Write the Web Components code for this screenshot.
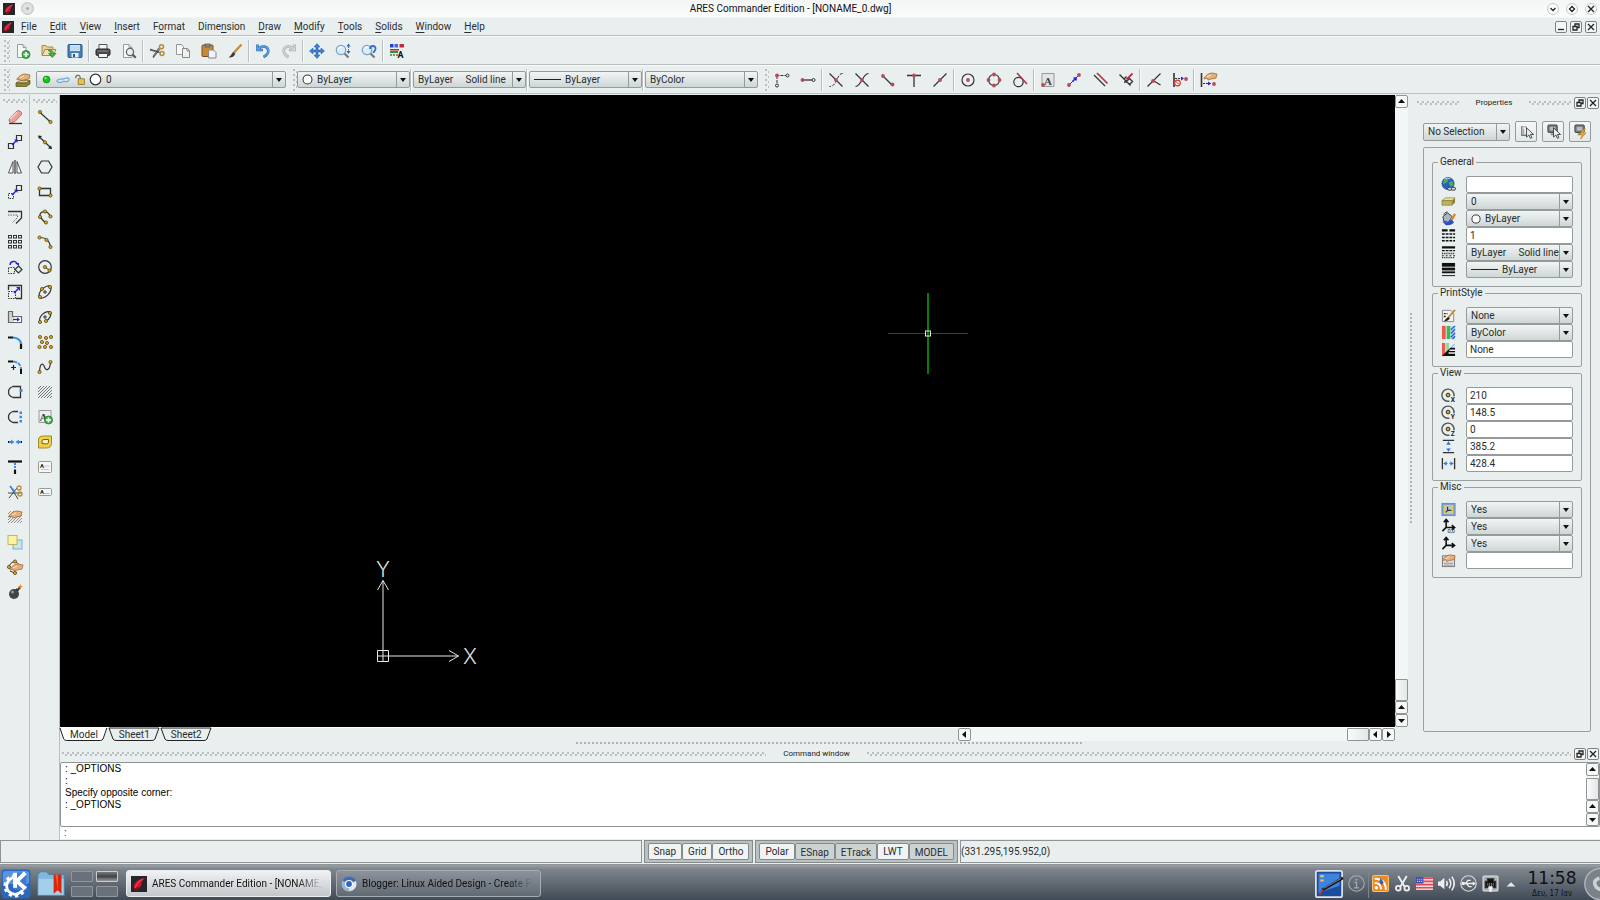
<!DOCTYPE html>
<html lang="en">
<head>
<meta charset="utf-8">
<title>ARES Commander Edition</title>
<style>
html,body{margin:0;height:100%}
body{font:10px/12px Roboto,"Open Sans",sans-serif;color:#2a2d2e;background:#e9efee;overflow:hidden}
</style>
</head>
<body>
<ares-app></ares-app>
<script>
const BASE = `*{box-sizing:border-box}button,input,select{font:inherit;color:inherit;margin:0;padding:0;border:0;background:none;border-radius:0;outline:0}svg{display:block}`;
function define(name, css, html) {
  customElements.define(name, class extends HTMLElement {
    connectedCallback() {
      if (this.shadowRoot) return;
      this.attachShadow({ mode: 'open' });
      this.shadowRoot.innerHTML = `<style>${BASE}${css}</style>` + (typeof html === 'function' ? html(this) : html);
    }
  });
}

/* ---------- icons, all on a 16 x 16 grid ---------- */
const K = 'stroke="#333" fill="none"';
const dot = (x, y, c = '#b84a5e') => `<circle cx="${x}" cy="${y}" r="1.9" fill="${c}"/>`;
const yd = (x, y) => `<circle cx="${x}" cy="${y}" r="1.6" fill="#d9a81e" stroke="#4a3a08" stroke-width=".7"/>`;
const page = (x, y) => `<path d="M${x} ${y}h5.500l3 3v7h-8.500z" fill="#f6f6f6" stroke="#9a9d9d"/><path d="M${x + 5.5} ${y}v3h3" fill="#ddd" stroke="#9a9d9d"/>`;
const hand = `<path d="M2 7c2-3 5-5 8-5l5 1-1 4-5 1-3 1-1-2-3 1z" fill="#e7b07a" stroke="#a3683a" stroke-width=".8"/><path d="M5 6l4-2" stroke="#fbe3c6"/>`;
const hatch = `<path d="M1 5l3-3M1 8l6-6M1 11l9-9M1 14L13 2M4 14L15 3M7 14l8-8M10 14l5-5M13 14l2-2" stroke="#666" stroke-width=".9"/>`;
const axes = `<path d="M5.500 2v8h8M5.500 10l-4 4M3 4.500l2.500-3 2.500 3M11.500 7.500l3 2.500-3 2.500" stroke="#111" fill="none" stroke-width="1.700"/>`;
const coordView = c => `<path d="M13.800 9A6.500 6.500 0 1 0 9 14" fill="none" stroke="#555" stroke-width="1.500"/><circle cx="7.500" cy="7.500" r="2" fill="#d9b01e" stroke="#222"/><text x="10.500" y="15" font-family="Roboto" font-size="7" font-weight="700" fill="#222">${c}</text>`;
const monitor = `<rect x="2" y="1" width="10" height="8" rx="1" fill="#777" stroke="#444"/><rect x="4" y="3" width="6" height="4" fill="#b9bec2"/><path d="M5 10h4v2H5z" fill="#888"/>`;
const cursor = `<path d="M8 4v10l2.500-2.300 1.700 3.600 1.600-.8-1.700-3.300h3.400z" fill="#eee" stroke="#333" stroke-width=".9"/>`;
const lens = `<circle cx="6" cy="7" r="4.700" fill="#d9ecfa" stroke="#7fa3c2" stroke-width="1.300"/><path d="M3.500 6.500a3 3 0 0 1 4-2" stroke="#fff" fill="none"/><path d="M9.500 10.500l4 4" stroke="#777" stroke-width="2.200"/>`;
const ICONS = {
  ares: `<rect width="16" height="16" fill="#26262a"/><path d="M3 12C2 7 7 3 14 2c-3 2-4 5-4 8l-4 4z" fill="#d3142c"/><path d="M4 13c1-5 4-8 8-10" stroke="#f2566a" fill="none"/><path d="M3 12l2 3 4-4z" fill="#8e0c1d"/>`,
  newdoc: `<path d="M2.500 1.500H8l3 3v10H2.500z" fill="#f8f8f8" stroke="#9a9d9d"/><path d="M8 1.500v3h3" fill="#ddd" stroke="#9a9d9d"/><circle cx="11" cy="11.500" r="4" fill="#3bb24a" stroke="#1f7a2c" stroke-width=".8"/><path d="M11 9v5M8.500 11.500h5" stroke="#fff" stroke-width="1.600"/>`,
  open: `<path d="M1 12V2.500h4l1.500 1.500H12v3" fill="#e8cf92" stroke="#a98a4a"/><path d="M1 12.500L4 6.500h11l-3 6z" fill="#f3e0b0" stroke="#a98a4a"/><path d="M7 7.500c3-1 5 0 5.500 3h2.500l-3.700 4-3.700-4h2.200c-.2-1.500-1-2.500-2.800-3z" fill="#4cae4a" stroke="#2a7a2a" stroke-width=".7"/>`,
  save: `<rect x="1" y="1.500" width="14" height="13" rx="1" fill="#4a7fb8" stroke="#2a5788"/><path d="M3 2h10v6H3z" fill="#cfe4f6"/><path d="M3 4h10M3 6h10" stroke="#a8c8e6" stroke-width=".7"/><path d="M4.500 10h7v4.500h-7z" fill="#e8eef2"/><path d="M6 11h2v3H6z" fill="#2a5788"/>`,
  print: `<path d="M4 1.500h8v5H4z" fill="#f4f4f4" stroke="#555"/><rect x="1" y="6" width="14" height="6.500" rx="1.500" fill="#4b4d4f" stroke="#222"/><path d="M2.500 8h11" stroke="#8b8e90"/><path d="M3.500 10.500h9v4h-9z" fill="#f4f4f4" stroke="#444"/>`,
  preview: `<path d="M2.500 1.500H8l3 3v10H2.500z" fill="#f8f8f8" stroke="#9a9d9d"/><path d="M8 1.500v3h3" fill="#ddd" stroke="#9a9d9d"/><circle cx="9" cy="9" r="3.600" fill="#e9f1f6cc" stroke="#666" stroke-width="1.300"/><path d="M11.800 11.800l3 3" stroke="#555" stroke-width="2"/>`,
  cut: `<path d="M1 7l9 2M4 14l6-9" stroke="#777" stroke-width="1.500"/><path d="M1 6l11 4M4 15l8-10" stroke="#333" stroke-width=".8"/><circle cx="12.500" cy="3.800" r="2" fill="none" stroke="#b58a3a" stroke-width="1.500"/><circle cx="13" cy="10.500" r="2" fill="none" stroke="#b58a3a" stroke-width="1.500"/>`,
  copy: `<path d="M1.500 1.500h5l2 2v8h-7z" fill="#f8f8f8" stroke="#999"/><path d="M7.500 5.500h5l2 2v7h-7z" fill="#f0f0f0" stroke="#888"/><path d="M12 5.500v2.500h2.500" fill="none" stroke="#888"/>`,
  paste: `<rect x="1" y="2" width="11" height="11.500" rx="1" fill="#c98a34" stroke="#7c4f17"/><rect x="4" y="1" width="5" height="3" fill="#888" stroke="#555" stroke-width=".7"/><path d="M7.500 7h5l2.500 2.500V15H7.500z" fill="#f2f2f2" stroke="#888"/>`,
  brush: `<path d="M14.500 1.500L7 9.500" stroke="#c9893c" stroke-width="2.200"/><path d="M8 9l-2 2" stroke="#888" stroke-width="2.500"/><path d="M6.500 9.500c-2 .5-2 3-5 5 3 .3 6-.8 6.500-3.500z" fill="#433"/>`,
  undo: `<path d="M2.500 1.500V7H8M3 6.500C6 2.500 12 2.500 13.200 7c.6 3-1.700 5.500-4.700 7" fill="none" stroke="#2867a8" stroke-width="2.600"/><path d="M2.500 2V7H7.500M3 6.500C6 2.500 12 2.500 13.200 7c.6 3-1.700 5.500-4.500 6.800" fill="none" stroke="#5a9ee2" stroke-width="1.600"/>`,
  redo: `<path d="M13.500 1.500V7H8M13 6.500C10 2.500 4 2.500 2.800 7c-.6 3 1.700 5.500 4.700 7" fill="none" stroke="#9fa4a4" stroke-width="2.600"/><path d="M13.500 2V7H8.500M13 6.500C10 2.500 4 2.500 2.800 7c-.6 3 1.700 5.500 4.500 6.800" fill="none" stroke="#cfd4d4" stroke-width="1.600"/>`,
  pan: `<path d="M8 .5l3 3.500H9v3h3V5l3.500 3-3.500 3V9H9v3h2l-3 3.500L5 12h2V9H4v2L.5 8 4 5v2h3V4H5z" fill="#3b7fd4" stroke="#1c559c" stroke-width=".5"/>`,
  zoomdyn: lens + `<path d="M13.500 1v9" stroke="#2864b4" stroke-dasharray="1.500 1"/><path d="M11.500 3.500l2-3 2 3zM11.500 8l2 3 2-3z" fill="#2864b4"/>`,
  zoomprev: lens + `<path d="M9 6c0-4 6-4 5.500 0 0 2-2 2-2 4" fill="none" stroke="#2f74c8" stroke-width="1.800"/>`,
  propspaint: `<path d="M1 1h3.500v3.500H1z" fill="#2244cc"/><path d="M5.500 1H9v3.500H5.500z" fill="#4466dd"/><path d="M10.500 1H15v3.500h-4.500z" fill="#cc2244"/><path d="M1 6h9v1.500H1z" fill="#c22"/><path d="M1 9h8" stroke="#18a038" stroke-width="2"/><path d="M1 12h8" stroke="#222" stroke-dasharray="2 1"/><text x="8.500" y="15" font-family="Roboto" font-size="9" font-weight="700" fill="#111">A</text>`,
  layers: `<path d="M1 11l4-2.500h10L11.500 11z" fill="#d8d07a" stroke="#6d6520" stroke-width=".7"/><path d="M1 11v3.500h10.500L15 12V8.500L11.500 11z" fill="#8d8436" stroke="#544d18" stroke-width=".7"/>` + hand,
  esn1: `<path d="M2.500 3.500H12M3 4v8" ${K} stroke-dasharray="3 1"/>${dot(3, 3.5)}<circle cx="13.500" cy="3.500" r="1.500" ${K}/><circle cx="3" cy="13.500" r="1.500" ${K}/>`,
  esn2: `<path d="M3 8h9" ${K} stroke-width="1.300"/>${dot(2.5, 8)}<circle cx="13.500" cy="8" r="1.500" ${K}/>`,
  inter: `<path d="M1.500 1.500l13 13" ${K} stroke-width="1.200"/><path d="M14.500 1.500c-6 0-5 13-13 13" ${K} stroke-dasharray="3 1.500"/>${dot(8, 8)}`,
  appint: `<path d="M1.500 1.500l13 13M14.500 1.500C8 2 8 14 1.500 14.500" ${K} stroke-width="1.200"/>${dot(8, 8)}`,
  endp: `<path d="M3 4l9 9" ${K} stroke-width="1.200"/>${dot(3, 4)}${dot(12.5, 12.5)}`,
  perpt: `<path d="M1 3.500h14M8 4v11" ${K} stroke-width="1.300"/>${dot(8, 3.5)}`,
  mid: `<path d="M1.500 14.500l13-13" ${K} stroke-width="1.200"/>${dot(8, 8)}`,
  center: `<circle cx="8" cy="8" r="6" ${K} stroke-width="1.200"/>${dot(8, 8)}`,
  quad: `<circle cx="8" cy="8" r="5.500" ${K} stroke-width="1.200"/>${dot(8, 2.5)}${dot(8, 13.5)}${dot(2.5, 8)}${dot(13.5, 8)}`,
  tangent: `<circle cx="6.500" cy="10" r="4.700" ${K} stroke-width="1.200"/><path d="M5 1l10 11" stroke="#b8304a" stroke-width="1.600"/>`,
  insertp: `<path d="M2 1.500h12v13H2z" fill="#e4e6e6" stroke="#999"/><text x="4" y="12.500" font-family="Liberation Serif" font-size="11" font-weight="700" fill="#444">A</text>${dot(3, 13)}`,
  node: `<path d="M3 13L13 3" stroke="#22a" stroke-width="1"/><path d="M6.500 9.500l3-3M7.500 6h2.500v2.500" stroke="#22e" stroke-width="1.600" fill="none"/>${dot(3, 13)}${dot(13, 3)}`,
  parallel: `<path d="M2 3l11 11" ${K} stroke-width="1.300"/><path d="M5 1l10.500 10.500" stroke="#b8304a" stroke-width="1.700"/>`,
  perp: `<path d="M1.500 2.500l11 11M6 7l2.500-2.500M9 10l-3 0M8.500 9.500l3-3 3 3-3.500 3.500" ${K} stroke-width="1.400"/><path d="M14.500 1.500l-6 6" stroke="#b8304a" stroke-width="1.800"/>`,
  nearest: `<path d="M1.500 14.500l13-13M8 9l6.500 4" ${K} stroke-width="1.200"/>${dot(7, 9)}`,
  clear: `<path d="M2 1v14" ${K} stroke-width="1.600"/><path d="M3 6.500h9" ${K} stroke-dasharray="2 1"/><path d="M9 4.500l3 2-3 2z" fill="#22c"/>${dot(14, 7)}<circle cx="5.500" cy="11" r="2.800" fill="#fff" stroke="#e03028" stroke-width="1.200"/><path d="M3.800 9.500l3.500 3" stroke="#e03028"/>`,
  esnopt: `<path d="M1.500 1v14" ${K} stroke-width="1.600"/><g transform="translate(2 -1)">${hand}</g><path d="M3 11.500h9" ${K} stroke-dasharray="2 1"/><path d="M8 9.500l3 2-3 2z" fill="#22c"/>${dot(14, 12)}`,
  erase: `<path d="M2 14.500h13" ${K} stroke-width="1.300"/><path d="M2.500 9.500L9.500 2.500q1.500-1.500 3.500-.5t1.500 3.500L8 12.500q-2 1.500-4.500 1T2.500 9.500z" fill="#eba199" stroke="#b4584e" stroke-width=".8"/><path d="M3 10l7-6.500" stroke="#f9d5d0" stroke-width="1.600"/>`,
  movec: `<path d="M1.500 9.500h5v5h-5zM9.500 1.500h5v5h-5z" ${K} stroke-width="1.200"/><path d="M5 11l4-4" stroke="#22d" stroke-width="1.500"/><path d="M7 5.500h3.500V9z" fill="#22d"/>`,
  mirror: `<path d="M6 2.500v11.500H1.500zM10 2.500v11.500h4.500z" fill="#fafafa" stroke="#444" stroke-width=".9"/><path d="M8 1v14" ${K} stroke-width="1.200"/>`,
  copyc: `<path d="M1.500 9.500h5v5h-5z" ${K} stroke-dasharray="1.500 1"/><path d="M9.500 1.500h5v5h-5z" ${K} stroke-width="1.200"/><path d="M5 11l4-4" stroke="#22d" stroke-width="1.500"/><path d="M7 5.500h3.500V9z" fill="#22d"/>`,
  offset: `<path d="M1 2.500h13.500V9L9 14.500" ${K} stroke-width="1.300"/><path d="M1 6h9.500v2.500L5 14" stroke="#666" fill="none" stroke-dasharray="1.500 1"/>`,
  array: [1.5, 6.5, 11.5].map(y => [1.5, 6.5, 11.5].map(x => `<rect x="${x}" y="${y}" width="3" height="2.500" ${K}/>`).join('')).join(''),
  rotate: `<path d="M1.500 9v5.500h6V8.500h-6" ${K} stroke-dasharray="1.500 1"/><path d="M11.500 7l3.500 3.500-3.500 3.500L8 10.500z" ${K} stroke-width="1.200"/><path d="M3 6c0-4 6-5 7-1" stroke="#22d" fill="none" stroke-width="1.300"/><path d="M8 4h4v3z" fill="#22d"/>`,
  scale: `<path d="M1.500 6V1.500h13v13H9" ${K} stroke-width="1.300"/><path d="M1.500 7.500h7v7h-7z" ${K} stroke-dasharray="1.500 1"/><path d="M7 9l4-4" stroke="#22d" stroke-width="1.500"/><path d="M9 3h4v4z" fill="#22d"/>`,
  stretch: `<path d="M1.500 2.500h4v5h9v6h-13z" fill="#d5d6c8" stroke="#666" stroke-width="1.200"/><path d="M7 8.500h7v4.500H7z" fill="#fff"/><path d="M6 10.500h6" stroke="#22d" stroke-width="1.300"/><path d="M10 8.500l3 2-3 2z" fill="#22d"/>`,
  fillet: `<path d="M1 3.500h5M14 9.500V15" stroke="#111" stroke-width="2.200"/><path d="M6 3.500Q13 4 14 9.500" fill="none" stroke="#3a8be8" stroke-width="2"/>`,
  addfillet: `<path d="M1 2.500h5M14 9.500V15" stroke="#111" stroke-width="2"/><path d="M6 2.500Q13 3 14 9.500" fill="none" stroke="#3a8be8" stroke-width="2" stroke-dasharray="4 1"/><path d="M6.500 6v5M4 8.500h5" stroke="#222" stroke-width="1.200"/>`,
  brk: `<path d="M13.500 5V2.500H6Q1.500 4 1.500 8T6 13.500h7.500V8" ${K} stroke-width="1.300"/><path d="M12.500 5h3v3h-3z" fill="#3a8be8"/>`,
  brk2: `<path d="M11 2.500H6Q1.500 4 1.500 8T6 13.500h5" ${K} stroke-width="1.300"/><path d="M12.500 2.500H15v2.500h-2.500zM12.500 6.800H15v2.500h-2.500zM12.500 11H15v2.500h-2.500z" fill="#3a8be8"/>`,
  join: `<path d="M1 8h2M13 8h2" stroke="#111" stroke-width="1.800"/><path d="M2 8h3M11 8h3" stroke="#3a8be8" stroke-width="1.800"/><path d="M4 5.500L7.500 8 4 10.500zM12 5.500L8.500 8l3.500 2.500z" fill="#3a8be8"/>`,
  extend: `<path d="M1 2.500h14" stroke="#111" stroke-width="2.200"/><path d="M8 4v7" stroke="#3a8be8" stroke-width="2" stroke-dasharray="2 1"/><path d="M8 11v4" stroke="#111" stroke-width="2.200"/>`,
  trim: `<path d="M1 9h13M3 2l8 13M2 14l8-10" stroke="#444"/><path d="M3 2l5 6" stroke="#3a8be8" stroke-width="1.800"/><circle cx="12" cy="4" r="2" fill="none" stroke="#b58a3a" stroke-width="1.300"/><circle cx="13" cy="10" r="2" fill="none" stroke="#b58a3a" stroke-width="1.300"/>`,
  edithatch: `<g opacity=".8">${hatch}</g>` + hand,
  order: `<rect x="6" y="6" width="9" height="9" fill="#c5e4f4" stroke="#6aa4c4" stroke-width=".8"/><rect x="1" y="1.500" width="9" height="9" fill="#fbf2a4" stroke="#b8aa4a" stroke-width=".8"/>`,
  editpoly: `<path d="M2 7q5-9 11 0M3 12l5 2" ${K}/>${yd(2, 8)}${yd(8, 2.5)}${yd(8, 14)}<g transform="translate(1 3)">${hand}</g>`,
  bomb: `<circle cx="7" cy="10" r="5" fill="#444"/><circle cx="5.500" cy="8" r="1.500" fill="#999"/><path d="M9 5l2 1 2-3" stroke="#333" stroke-width="1.800" fill="none"/><path d="M13.500 0l.5 2 2 .5-2 1-.5 2-1-2-2-.5 2-1z" fill="#f08020"/>`,
  line: `<path d="M2.500 3l11 10" ${K} stroke-width="1.200"/>${yd(3, 3)}${yd(13.5, 13)}`,
  iline: `<path d="M2 2.500L14 14" ${K} stroke-width="1.200"/><path d="M1 1.500l4 .5-3 3zM15 15l-4-.5 3-3z" fill="#222"/>${yd(8, 8.3)}`,
  poly: `<path d="M4.500 2h7L15 8l-3.500 6h-7L1 8z" ${K} stroke-width="1.200"/>`,
  rect: `<path d="M2.500 4.500h11v7h-11z" ${K} stroke-width="1.300"/>${yd(2.5, 4.5)}${yd(13.5, 11.5)}`,
  arc3: `<path d="M3 8C2 2 10 0 13 7M8 13.500L3 8" ${K} stroke-width="1.200"/>${yd(3, 8)}${yd(8, 2.5)}${yd(13.5, 7.5)}${yd(9, 13.5)}`,
  arc: `<path d="M2.500 3.500Q12 3 13.500 13" ${K} stroke-width="1.200"/>${yd(2.5, 3.5)}${yd(9.5, 6)}${yd(13.5, 13)}`,
  circle: `<circle cx="8" cy="8" r="6.300" ${K} stroke-width="1.200"/><path d="M8 8l4 3" ${K}/>${yd(8, 8)}${yd(12.5, 11.5)}`,
  ellipse: `<ellipse cx="8" cy="8" rx="7.500" ry="4" transform="rotate(-45 8 8)" ${K} stroke-width="1.200"/><path d="M8 6v4M6 8h4" ${K}/>${yd(3, 13)}${yd(13, 3)}${yd(5, 5)}`,
  ellarc: `<path d="M3 13C1 8 8 1 13 3c2 2 0 7-4 9" ${K} stroke-width="1.200"/><path d="M8 6v4M6 8h4" ${K}/>${yd(3, 13)}${yd(13, 4)}${yd(9, 12)}`,
  points: yd(3, 3) + yd(9, 4) + yd(14, 3) + yd(5, 8) + yd(10, 9) + yd(2.5, 13) + yd(8, 13) + yd(14, 13),
  spline: `<path d="M2.500 13C3 3 6 4 7.500 8S13 12 13.500 3" ${K} stroke-width="1.200"/>${yd(2.5, 13)}${yd(13.5, 3)}`,
  hatch,
  note: `<path d="M2 1.500h12v12H2z" fill="#eee" stroke="#999"/><text x="2.500" y="12" font-family="Liberation Serif" font-size="11" font-weight="700" fill="#444">A</text><circle cx="11.500" cy="11" r="4" fill="#3bb24a" stroke="#1f7a2c" stroke-width=".8"/><path d="M11.500 8.500v5M9 11h5" stroke="#fff" stroke-width="1.600"/>`,
  region: `<path d="M1.500 5Q2 2 6 2h8.500v7q0 5-5 5H1.500z" fill="#f0cf4c" stroke="#9a8022" stroke-width=".9"/><path d="M5 9.500V7q0-1.500 2-1.500h4.500V8q0 2-2 2z" fill="#f8eebc" stroke="#7a6412"/>`,
  text1: `<rect x="1.500" y="2.500" width="13" height="11" rx="1" fill="#f5f6f6" stroke="#999"/><text x="3" y="9" font-family="Roboto" font-size="6" font-weight="700" fill="#222">A</text><path d="M7.500 7h5M4 10.500h8" stroke="#bbb" stroke-width=".8"/>`,
  text2: `<rect x="1.500" y="4.500" width="13" height="7" rx="1" fill="#f5f6f6" stroke="#999"/><text x="3" y="10" font-family="Roboto" font-size="6" font-weight="700" fill="#222">A</text><path d="M7.500 9.500h5" stroke="#bbb"/>`,
  quick: `<path d="M3 2v10h6" fill="none" stroke="#777" stroke-width="1.400"/><path d="M3 3h5v3M5 5v6" stroke="#999" fill="none"/>` + cursor,
  selmon: monitor + cursor,
  flash: monitor + `<path d="M12 5l-5 6h3l-2 5 6-6.500h-3L13 5z" fill="#f2b320" stroke="#a87308" stroke-width=".6"/>`,
  globe: `<circle cx="7.500" cy="7" r="6.500" fill="#2a5fc0" stroke="#143a7c" stroke-width=".7"/><path d="M3 3q3-2.500 5-1l-1 3-3 2-2 1zM8 6l4-2 1.500 4-3 3z" fill="#45b058"/><path d="M4 2q3-1.500 6 0" stroke="#bcd8ff" fill="none"/><rect x="7" y="11" width="5" height="3" rx="1.500" fill="#ddd" stroke="#333"/><rect x="11" y="11" width="4.500" height="3" rx="1.500" fill="#ddd" stroke="#333"/>`,
  layer: `<path d="M1 7l4-3h10l-3 3z" fill="#e6de94" stroke="#7a7230" stroke-width=".6"/><path d="M1 7v5h11V7z" fill="#bdb35c" stroke="#7a7230" stroke-width=".6"/><path d="M12 7l3-3v5l-3 3z" fill="#8a8138"/>`,
  bucket: `<path d="M2 6l5-4 5 4-4 6-5-1z" fill="#a8b6c6" stroke="#334"/><path d="M3 4q1-3 4-3" ${K}/><path d="M15 3l-4 7" stroke="#d98c2c" stroke-width="2.500"/><path d="M1 11q6 3 10-2l3 3q-3 4-9 3z" fill="#2a4fc8"/>`,
  ltscale: `<path d="M1 2.500h14" stroke="#111" stroke-width="2.500" stroke-dasharray="6 2"/><path d="M1 6.500h14M1 10h14M1 13.500h14" stroke="#111" stroke-width="1.600" stroke-dasharray="3 1"/>`,
  ltype: `<path d="M1 2.500h14" stroke="#111" stroke-width="2.400"/><path d="M1 6h14" stroke="#111" stroke-width="1.500" stroke-dasharray="3 1"/><path d="M1 9h14M1 13.500h14" stroke="#111" stroke-width="1.500" stroke-dasharray="1 1"/><path d="M1 11.500h14" stroke="#111" stroke-dasharray="2 2"/>`,
  lweight: `<path d="M1 3h14" stroke="#111" stroke-width="4"/><path d="M1 7.500h14" stroke="#111" stroke-width="3"/><path d="M1 11h14" stroke="#111" stroke-width="2"/><path d="M1 14.500h14" stroke="#111"/>`,
  pstyle: `<path d="M1.500 2.500h9l3 3v9h-12z" fill="#f4f4f4" stroke="#888"/><path d="M3 6h4M3 9h3" stroke="#222" stroke-width="1.500" stroke-dasharray="2 1"/><path d="M15 2L7 11" stroke="#c9893c" stroke-width="2"/><path d="M8 9.500q-3 1-5 5 4-.5 6.500-3z" fill="#222"/>`,
  ptable: `<path d="M1 1h4v14H1z" fill="#ec5a4c"/><path d="M6 1h4v14H6z" fill="#3cb85c"/><path d="M10.500 1H15v14h-4.500z" fill="#b8d0f4"/><path d="M10.500 5L15 1M10.500 9L15 4.500M10.500 13L15 8.500M12 15l3-3" stroke="#2864c8" stroke-width="1.400"/>`,
  pattach: `<path d="M1 1h3.500v14H1z" fill="#ec5a4c"/><path d="M5.500 1h3v9l-3 3z" fill="#8cd8a0"/><path d="M9.500 8l5-6" stroke="#6a9be8"/><path d="M1 15L10 6h5v2H9v1.500h6V11H8v1.500h7V15z" fill="#111"/>`,
  cx: coordView('X'), cy: coordView('Y'), cz: coordView('Z'),
  height: `<path d="M2 1.500h12M2 14.500h12" ${K} stroke-width="1.400"/><path d="M8 3v10" stroke="#3a78e0" stroke-dasharray="3 4"/><path d="M5.500 6L8 2.500 10.500 6zM5.500 10L8 13.500l2.500-3.500z" fill="#3a78e0"/>`,
  width: `<path d="M1.500 2v12M14.500 2v12" ${K} stroke-width="1.400"/><path d="M3 8h10" stroke="#3a78e0" stroke-dasharray="4 2"/><path d="M6 5.500L2.500 8 6 10.500zM10 5.500L13.500 8 10 10.500z" fill="#3a78e0"/>`,
  ucsicon: `<rect x="1" y="1.500" width="14" height="13" fill="#7f9fdc" stroke="#6a88c8"/><rect x="3.500" y="4" width="9" height="8" fill="#b4c8ec" stroke="#e8d030" stroke-width="1.400"/><path d="M7 5v4h4M7 9l-2 2" ${K} stroke-width="1.300"/>`,
  origin: `<g transform="translate(0 -1)">${axes}</g><text x="7" y="15" font-family="Roboto" font-size="6" fill="#222">0,0</text>`,
  axes,
  ucsname: `<rect x="1.500" y="3" width="13" height="11.500" fill="#ddd" stroke="#777"/><path d="M3 11h10M3 13h10" stroke="#999"/>` + hand,
  green: `<circle cx="8" cy="8" r="5" fill="#14c814" stroke="#0a7a0a"/><circle cx="6.500" cy="6" r="1.500" fill="#8cf08c"/>`,
  cloud: `<path d="M1 9.500Q1.500 6.500 7 7l6-1.500q3 .5 1.500 3T9 9.500q-5 3-8 0z" fill="#cfe6f6" stroke="#6aa4d0" stroke-width="1.200"/>`,
  unlock: `<rect x="6" y="7" width="9" height="8" fill="#e8c24c" stroke="#7c6212"/><path d="M9 7V5Q8 1 5 2T2.500 6" fill="none" stroke="#777" stroke-width="2"/>`,
  ring: `<circle cx="8" cy="8" r="6.500" fill="#fff" stroke="#333" stroke-width="1.500"/>`,
  kde: `<rect x=".3" y=".3" width="15.400" height="15.400" rx="1.800" fill="#2a68c0"/><rect x="1" y="1" width="14" height="7" rx="1.500" fill="#5a94e0"/><circle cx="7.500" cy="9" r="4.500" fill="none" stroke="#fff" stroke-width="1.500"/><circle cx="7.500" cy="9" r="5.500" fill="none" stroke="#fff" stroke-width="1.400" stroke-dasharray="1.700 1.750"/><path d="M6.500 2h7v9h-7z" fill="#3f7cd0"/><path d="M7.500 2v8M13 2L8.500 6.500 13 10.500" fill="none" stroke="#fff" stroke-width="2.100"/>`,
  folder: `<path d="M.5 14.500v-12L2 1h3.500L7 2.500h8.500v12z" fill="#7fb8dc" stroke="#4a86b0" stroke-width=".6"/><path d="M.8 5h14.400v9.200H.8z" fill="#a4cfea"/><path d="M9.500 2.500H14V13.500l-2.200-2-2.300 2z" fill="#d8260c"/><path d="M10.500 2.500h1.500v9" fill="#f05a30"/>`,
  chromium: `<circle cx="8" cy="8" r="7.500" fill="#9fb4cc"/><path d="M8 8L1.500 4.500A7.500 7.500 0 0 1 15 5z" fill="#3f6cb0"/><path d="M8 8l7-3q1.500 6-3 9l-4 1z" fill="#dfe6ee"/><circle cx="8" cy="8" r="3.500" fill="#2f66c8" stroke="#fff" stroke-width="1.200"/>`,
  desk: `<rect x=".5" y=".5" width="15" height="15" rx="1" fill="#1c4c9c" stroke="#dde2e6"/><path d="M2 2h12v7L2 13z" fill="#3f84dc"/><path d="M3 3.500h2M3 6h2" stroke="#f0c060" stroke-width="1.200"/><path d="M4 11.500l12-7" stroke="#111" stroke-width="1.500"/><path d="M5 10.500l10-5.700" stroke="#99a" stroke-width=".5"/><path d="M2.500 14l2-3" stroke="#c33"/>`,
  info: `<circle cx="8" cy="8" r="7.300" fill="none" stroke="#a6abb2"/><circle cx="8" cy="4.500" r="1" fill="#a6abb2"/><path d="M6 7h2v5M5.500 12.200h5" stroke="#a6abb2" stroke-width="1.200" fill="none"/>`,
  rss: `<rect x=".5" y=".5" width="15" height="15" rx="1.500" fill="#ee8a22" stroke="#f8c070"/><circle cx="4" cy="12" r="1.600" fill="#fff"/><path d="M2.500 7.500q6 0 6 6M2.500 3.500q10.500 0 10.500 10.500" fill="none" stroke="#fff" stroke-width="1.800"/><path d="M8 2.500l3 4.500-2 2.500-2-3z" fill="#2a60b8"/>`,
  klip: `<path d="M4 1l6 10M12 1L6 11" stroke="#eee" stroke-width="1.800"/><circle cx="4" cy="12.500" r="2.200" fill="none" stroke="#eee" stroke-width="1.700"/><circle cx="12" cy="12.500" r="2.200" fill="none" stroke="#eee" stroke-width="1.700"/>`,
  flag: `<rect y="2" width="16" height="12" fill="#f4dede"/><path d="M0 3h16M0 6h16M0 9h16M0 12h16" stroke="#e04a58" stroke-width="1.600"/><rect y="2" width="7" height="6" fill="#3a4cb0"/><path d="M1 4h5M1 6h5" stroke="#cdd" stroke-dasharray="1 1"/>`,
  sound: `<path d="M0 6h2l4-3.500v11L2 10H0z" fill="#eee"/><path d="M8 5.500q1.500 2.500 0 5M10.500 3.500q3 4.500 0 9M13 1.500q4.500 6.500 0 13" fill="none" stroke="#eee" stroke-width="1.500"/>`,
  usb: `<circle cx="8" cy="8" r="7.300" fill="none" stroke="#d8dbde"/><path d="M2 8h12M5 8l2.500-3H10M6 8l2.500 3H11" stroke="#eee" stroke-width="1.200" fill="none"/><circle cx="3" cy="8" r="1.700" fill="#eee"/><path d="M12 6l3 2-3 2z" fill="#eee"/>`,
  net: `<rect x="1" y="1" width="14" height="14" rx="1" fill="#aaafb4" stroke="#e4e6e8"/><path d="M3 12V6h2V3.500h6V6h2v6z" fill="#111" stroke="#333"/><path d="M5.500 7.500v3M7.200 7.500v3M8.900 7.500v3M10.600 7.500v3" stroke="#999" stroke-width=".7"/><path d="M6 10.500h4v3H9V16H7v-2.500H6z" fill="#f4f4f4"/>`,
  up: `<path d="M1 12l7-7 7 7z" fill="#e8eaec"/>`,
  cashew: `<circle cx="10" cy="8" r="9.500" fill="#7b828a" stroke="#b4b9be" stroke-width=".8"/><path d="M9.500 4.500q-4 1-2.500 4.500t6 1.500" fill="none" stroke="#cfd3d6" stroke-width="2.200"/>`
};

define('ares-icon', `:host{display:block;flex:none;width:var(--size,16px);height:var(--size,16px)}svg{width:100%;height:100%;overflow:visible}`,
  el => `<svg viewBox="0 0 16 16" aria-hidden="true">${ICONS[el.getAttribute('name')]}</svg>`);

define('ares-grip', `:host{display:block;flex:none;opacity:.75;background:radial-gradient(circle at 1px 1px,#a9afaf 1px,transparent 1px) 0 0/5px 5px,radial-gradient(circle at 1px 1px,#a9afaf 1px,transparent 1px) 3px 2px/5px 5px}`, '');

define('ares-tool', `:host{display:block;flex:none;width:26px;height:25px}button{width:100%;height:100%;display:grid;place-items:center}`,
  el => `<button title="${el.getAttribute('icon')}" aria-label="${el.getAttribute('icon')}"><ares-icon name="${el.getAttribute('icon')}"></ares-icon></button>`);

define('ares-sep', `:host{display:block;flex:none;width:2px;height:22px;border-left:1px solid #b9bfbf;border-right:1px solid #fafcfc}`, '');

define('ares-toolbar', `:host{display:flex;align-items:center;border-top:1px solid #fafcfb;border-bottom:1px solid #b9bfbf;padding-left:4px}ares-grip{width:6px;height:22px}`,
  `<ares-grip></ares-grip><slot></slot>`);

define('ares-combo', `:host{display:flex;flex:none;height:17px;border:1px solid #959b9b;border-radius:2px;background:linear-gradient(#f1f5f4,#cfd6d6);align-items:center;position:relative;overflow:hidden}
::slotted(*){margin-left:4px}
select{appearance:none;flex:1;min-width:0;width:0;height:100%;padding-left:4px;line-height:15px;overflow:hidden}
i{flex:none;align-self:stretch;width:13px;border-left:1px solid #959b9b;display:grid;place-items:center;pointer-events:none}
i::after{content:"";border:3px solid transparent;border-top:4px solid #111;border-bottom:0}`,
  el => `<slot></slot><select aria-label="${el.getAttribute('label')}"><option>${el.getAttribute('value').replace(/ {2,}/g, m => '&nbsp;'.repeat(m.length))}</option></select><i></i>`);

define('ares-arrow', `:host{display:block;flex:none;width:13px;height:13px}button{width:100%;height:100%;border:1px solid #8f9595;border-radius:2px;background:#f6f8f8;display:grid;place-items:center}svg{width:7px;height:7px}`,
  el => `<button aria-label="Scroll ${el.getAttribute('dir')}"><svg viewBox="0 0 7 7"><path fill="#111" d="${{ up: 'M0 5l3.500-4L7 5z', down: 'M0 2h7L3.500 6z', left: 'M5 0v7L1 3.500z', right: 'M2 0v7l4-3.500z' }[el.getAttribute('dir')]}"/></svg></button>`);

define('ares-scroll', `:host{display:flex;background:#f3f6f6}:host([vertical]){flex-direction:column;width:13px}:host(:not([vertical])){height:13px}
.track{flex:1}.thumb{flex:none;border:1px solid #8f9595;border-radius:1px;background:linear-gradient(90deg,#fafbfb,#e2e7e7);width:22px;height:13px}:host([vertical]) .thumb{width:13px;height:22px}`,
  el => { const v = el.hasAttribute('vertical'), a = v ? 'up' : 'left', b = v ? 'down' : 'right';
    return `<ares-arrow dir="${a}"></ares-arrow><div class="track"></div><div class="thumb"></div><ares-arrow dir="${a}"></ares-arrow><ares-arrow dir="${b}"></ares-arrow>`; });

define('ares-winbtn', `:host{display:block;flex:none}button{width:12px;height:12px;border:1px solid #7c8282;border-radius:2px;background:#f3f6f6;display:grid;place-items:center}svg{width:8px;height:8px}:host([round]) button{border-radius:50%;border-color:#c4c9c9;background:#fbfcfc}`,
  el => `<button aria-label="${el.getAttribute('kind')}"><svg viewBox="0 0 8 8" fill="none" stroke="#222" stroke-width="1.300"><path d="${{ close: 'M1 1l6 6M7 1L1 7', float: 'M3 3V1h4v3.500H5M1 3.500h4V7H1z', min: 'M1 6.500h6', down: 'M1.500 3L4 5.500 6.500 3', diamond: 'M4 1.500L6.500 4 4 6.500 1.500 4z' }[el.getAttribute('kind')]}"/></svg></button>`);

define('ares-docktitle', `:host{display:flex;align-items:center;padding:0 1px 0 2px}ares-grip{flex:1;height:5px}h2{font:8px/12px Roboto,sans-serif;margin:0 17px;color:#222}ares-winbtn{margin-left:1px}ares-winbtn.f{margin-left:3px}`,
  `<ares-grip></ares-grip><h2><slot></slot></h2><ares-grip></ares-grip><ares-winbtn class="f" kind="float"></ares-winbtn><ares-winbtn kind="close"></ares-winbtn>`);

define('ares-group', `:host{display:block}fieldset{margin:0;border:1px solid #9aa0a0;border-radius:2px;padding:8px 8px 8px;min-width:0}legend{padding:0 2px;margin-left:-3px;font-size:10px;line-height:12px}`,
  el => `<fieldset><legend>${el.getAttribute('title-text')}</legend><slot></slot></fieldset>`);

define('ares-field', `:host{display:grid;grid-template-columns:16px minmax(0,1fr);column-gap:9px;height:17px;align-items:center}label{--size:15px}input{width:100%;height:17px;border:1px solid #959b9b;border-radius:2px;background:#fff;padding-left:3px}`,
  el => { const n = el.getAttribute('label'), v = el.getAttribute('value') || '', ic = `<ares-icon name="${el.getAttribute('icon')}"></ares-icon>`;
    return el.hasAttribute('combo')
      ? `<label>${ic}</label><ares-combo label="${n}" value="${v}"><slot></slot></ares-combo>`
      : `<label for="f" aria-label="${n}">${ic}</label><input id="f" value="${v}" aria-label="${n}">`; });

define('ares-line', `:host{display:block;flex:none;width:27px;height:1px;background:#222}`, '');

define('ares-menubar', `:host{display:flex;align-items:center;height:19px;padding:0 3px 0 2px;border-top:1px solid #f1f5f4;border-bottom:1px solid #b9bfbf;--size:12px}nav{display:flex;gap:13px;margin-left:7px;flex:1}u{text-underline-offset:2px}ares-winbtn{margin-left:3px}`,
  `<ares-icon name="ares"></ares-icon><nav>${['_File', '_Edit', '_View', '_Insert', 'F_ormat', 'Dime_nsion', '_Draw', '_Modify', '_Tools', '_Solids', '_Window', '_Help'].map(t => `<button>${t.replace(/_(.)/, '<u>$1</u>')}</button>`).join('')}</nav><ares-winbtn kind="min"></ares-winbtn><ares-winbtn kind="float"></ares-winbtn><ares-winbtn kind="close"></ares-winbtn>`);

define('ares-titlebar', `:host{display:flex;align-items:center;height:17px;padding:0 3px;background:linear-gradient(#f4f6f5,#fbfcfc);--size:12px}h1{flex:1;text-align:center;font:10px/12px Roboto,sans-serif;margin:0;padding-left:7px;color:#111}.b{width:13px;height:13px;border-radius:50%;border:1px solid #bfc3c3;background:radial-gradient(circle,#a9adad 1px,#e2e5e5 2px,#d3d6d6);margin-left:6px}ares-winbtn{margin-left:7px}`,
  `<ares-icon name="ares"></ares-icon><button class="b" aria-label="Window menu"></button><h1>ARES Commander Edition - [NONAME_0.dwg]</h1><ares-winbtn round kind="down"></ares-winbtn><ares-winbtn round kind="diamond"></ares-winbtn><ares-winbtn round kind="close"></ares-winbtn>`);

define('ares-palette', `:host{display:flex;flex-direction:column;align-items:center;width:30px;border-right:1px solid #b9bfbf;padding-top:4px}ares-grip{width:24px;height:5px}`,
  el => `<ares-grip></ares-grip>${el.getAttribute('tools').split(' ').map(t => `<ares-tool icon="${t}"></ares-tool>`).join('')}`);

define('ares-canvas', `:host{display:block;position:relative;background:#000;overflow:hidden}svg{position:absolute;overflow:visible}.cross{left:65%;top:238px;width:1px;height:1px}.ucs{left:323px;bottom:70px;width:1px;height:1px}text{font:300 21px Inter,Lato,sans-serif;fill:#ddd}`,
  `<svg class="cross" viewBox="0 0 1 1"><path d="M-40 .5h80" stroke="#c80000"/><path d="M0-40v81" stroke="#087c08" stroke-width="2"/><rect x="-2.500" y="-2" width="5" height="5" fill="none" stroke="#e8e8e8"/></svg>
<svg class="ucs" viewBox="0 0 1 1" fill="none" stroke="#e6e6e6"><path d="M-5.500-5.500h11v11h-11zM-5.500 0h81M0 5.500v-81M66-5.500L75.500 0 66 5.500M-5.500-66L0-75.500 5.500-66"/><text x="80" y="8" stroke="none">X</text><text x="-7" y="-79" stroke="none">Y</text></svg>`);

define('ares-tab', `:host{display:block;flex:none}button{position:relative;height:13px;padding:0 9px 0 10px;line-height:12px}svg{position:absolute;inset:0;width:100%;height:100%;overflow:visible}span{position:relative}`,
  el => `<button role="tab" aria-selected="${el.hasAttribute('active')}"><svg viewBox="0 0 50 13" preserveAspectRatio="none"><path d="M0 0L4 11Q5 12.500 7 12.500H43Q45 12.500 46 11L50 0${el.hasAttribute('active') ? '' : 'z'}" fill="${el.hasAttribute('active') ? '#fff' : '#e9efee'}" stroke="#222" vector-effect="non-scaling-stroke"/></svg><span><slot></slot></span></button>`);

define('ares-drawing', `:host{display:grid;grid-template:minmax(0,1fr) 14px / minmax(0,1fr) 13px}.bottom{display:flex;gap:2px;border-top:1px solid #fff;align-items:start}.sp{flex:1}ares-scroll.h{width:437px}`,
  `<ares-canvas></ares-canvas><ares-scroll vertical></ares-scroll><div class="bottom" role="tablist"><ares-tab active>Model</ares-tab><ares-tab>Sheet1</ares-tab><ares-tab>Sheet2</ares-tab><div class="sp"></div><ares-scroll class="h"></ares-scroll></div>`);

define('ares-properties', `:host{display:flex;flex-direction:column;padding-bottom:9px}ares-docktitle{height:16px}
.pick{display:flex;gap:5px;margin:10px 8px 5px;height:21px;align-items:center}.pick ares-combo{width:87px;height:18px}.pick button{width:22px;height:21px;border:1px solid #959b9b;border-radius:2px;background:linear-gradient(#f6f8f8,#e2e7e7);display:grid;place-items:center;--size:15px;margin-left:0}
.panel{flex:1;margin:0 9px 0 8px;border:1px solid #9aa0a0;border-radius:2px;padding:8px;overflow:hidden}.ring{--size:10px}`,
  `<ares-docktitle>Properties</ares-docktitle>
<div class="pick"><ares-combo label="Selection" value="No Selection"></ares-combo><button aria-label="Quick select"><ares-icon name="quick"></ares-icon></button><button aria-label="Select entities"><ares-icon name="selmon"></ares-icon></button><button aria-label="Smart select"><ares-icon name="flash"></ares-icon></button></div>
<div class="panel">
<ares-group title-text="General"><ares-field icon="globe" label="Hyperlink"></ares-field><ares-field combo icon="layer" label="Layer" value="0"></ares-field><ares-field combo icon="bucket" label="Line color" value="ByLayer"><ares-icon class="ring" name="ring"></ares-icon></ares-field><ares-field icon="ltscale" label="Line scale" value="1"></ares-field><ares-field combo icon="ltype" label="Line style" value="ByLayer     Solid line"></ares-field><ares-field combo icon="lweight" label="Line weight" value="ByLayer"><ares-line></ares-line></ares-field></ares-group>
<ares-group title-text="PrintStyle"><ares-field combo icon="pstyle" label="Print style" value="None"></ares-field><ares-field combo icon="ptable" label="Print style table" value="ByColor"></ares-field><ares-field icon="pattach" label="Attached to" value="None"></ares-field></ares-group>
<ares-group title-text="View"><ares-field icon="cx" label="Center X" value="210"></ares-field><ares-field icon="cy" label="Center Y" value="148.5"></ares-field><ares-field icon="cz" label="Center Z" value="0"></ares-field><ares-field icon="height" label="Height" value="385.2"></ares-field><ares-field icon="width" label="Width" value="428.4"></ares-field></ares-group>
<ares-group title-text="Misc"><ares-field combo icon="ucsicon" label="CCS per view" value="Yes"></ares-field><ares-field combo icon="origin" label="Icon at origin" value="Yes"></ares-field><ares-field combo icon="axes" label="Icon visible" value="Yes"></ares-field><ares-field icon="ucsname" label="CCS name"></ares-field></ares-group>
</div>`);

define('ares-command', `:host{display:flex;flex-direction:column;height:99px}.split{height:6px;display:flex;justify-content:center}.split i{width:33%;height:3px;margin-top:1px;background:radial-gradient(circle at 1px 1px,#adb3b3 1px,transparent 1px) 0 0/4px 4px}
ares-docktitle{height:15px;padding-bottom:1px}.log{flex:1;display:flex;border:1px solid #8f9595;border-radius:2px;background:#fff;min-height:0}.log div{flex:1;font:10px/12px "Liberation Sans",Arial,sans-serif;color:#000;padding:0 4px;white-space:pre;overflow:hidden}
input{height:12px;background:#fff;padding-left:4px;font:10px/12px "Liberation Sans",Arial,sans-serif;width:100%;margin-bottom:1px}`,
  `<div class="split"><i></i></div><ares-docktitle>Command window</ares-docktitle><div class="log"><div>: _OPTIONS\n:\nSpecify opposite corner:\n: _OPTIONS</div><ares-scroll vertical></ares-scroll></div><input aria-label="Command" value=":">`);

define('ares-statusbar', `:host{display:flex;gap:2px;height:25px;padding-bottom:1px;border-bottom:1px solid #8f9595}.msg{flex:1;border:1px solid #8f9595}.pos{border:1px solid #8f9595;border-right:0;line-height:21px;flex:none;width:40%}
.box{display:flex;border:1px solid #858b8b;padding:2px 3px;background:#b9c1c1}.box button{height:100%;padding:0 5px;border:1px solid #858b8b;border-radius:2px;background:#f1f4f4;line-height:15px}.box button[aria-pressed=true]{background:#cdd3d3;padding-top:1px}`,
  `<div class="msg"></div><div class="box"><button>Snap</button><button>Grid</button><button>Ortho</button></div><div class="box"><button>Polar</button><button aria-pressed="true">ESnap</button><button aria-pressed="true">ETrack</button><button>LWT</button><button aria-pressed="true">MODEL</button></div><div class="pos">(331.295,195.952,0)</div>`);

define('ares-task', `:host{display:block;width:205px;flex:none;--size:16px}button{width:100%;height:27px;display:flex;align-items:center;gap:5px;padding:0 7px 0 4px;border:1px solid #a7acb2;border-radius:3px;background:linear-gradient(#8d939b,#616a74);color:#111;text-align:left}
:host([active]) button{background:linear-gradient(#f0f1f2,#c3c7cb);border-color:#eceeef}span{flex:1;white-space:nowrap;overflow:hidden;mask-image:linear-gradient(90deg,#000 85%,transparent)}`,
  el => `<button><ares-icon name="${el.getAttribute('icon')}"></ares-icon><span><slot></slot></span></button>`);

define('ares-taskbar', `:host{display:flex;align-items:center;height:35px;background:linear-gradient(#999fa6,#7d848c 12%,#5c656f 60%,#414b55);padding:2px 0 0 1px;overflow:hidden;color:#111}
.k{--size:30px}.f{--size:28px;margin:0 6px}.pager{display:grid;grid-template:11px 11px/22px 22px;gap:4px 3px;margin-right:8px}.pager i{border:1px solid #8f969d;background:#69727b;border-radius:1px}.pager i:nth-child(2){background:linear-gradient(#777,#444 50%,#999);border-color:#ccc}
ares-task+ares-task{margin-left:5px}.sp{flex:1}.tray{display:flex;align-items:center;gap:5px;--size:17px}.d{--size:28px}.tray hr{height:28px;width:1px;border:0;background:#7c848c;margin:0 -2px}.u{--size:10px;margin:0 2px}
.clock{text-align:center;width:56px;margin:0 4px 0 6px;align-self:start;padding-top:1px}.clock time{display:block;font:17px/20px "DejaVu Sans",sans-serif}.clock small{display:block;font:8px/10px "DejaVu Sans Condensed",sans-serif;margin-top:1px}.c{--size:26px;margin:0 -10px 0 0}`,
  `<ares-icon class="k" name="kde"></ares-icon><ares-icon class="f" name="folder"></ares-icon><div class="pager"><i></i><i></i><i></i><i></i></div>
<ares-task active icon="ares">ARES Commander Edition - [NONAME_0.dwg]</ares-task><ares-task icon="chromium">Blogger: Linux Aided Design - Create Post</ares-task><div class="sp"></div>
<div class="tray"><ares-icon class="d" name="desk"></ares-icon><ares-icon name="info"></ares-icon><hr><ares-icon name="rss"></ares-icon><ares-icon name="klip"></ares-icon><ares-icon name="flag"></ares-icon><ares-icon name="sound"></ares-icon><ares-icon name="usb"></ares-icon><ares-icon name="net"></ares-icon><ares-icon class="u" name="up"></ares-icon></div>
<div class="clock"><time>11:58</time><small>Δευ, 17 Ιαν</small></div><ares-icon class="c" name="cashew"></ares-icon>`);

const bar = s => s.split('|').map(g => g.trim().split(' ').map(t => `<ares-tool icon="${t}"></ares-tool>`).join('')).join('<ares-sep></ares-sep>');
define('ares-app', `:host{display:flex;flex-direction:column;height:100vh;background:#e9efee}
.t1,.t2{height:29px}.t2 ares-combo{height:17px}.ring{--size:11px}.g{width:4px;height:22px}
.lay{width:250px;--size:11px}.lay .w{--size:14px}.lay .r{--size:13px}.c{width:113px}ares-sep+.c{margin-left:1px}.gap{width:7px;flex:none}
.work{flex:1;display:flex;min-height:0;padding-top:1px}.right{flex:1;display:flex;flex-direction:column;min-width:0}.top{flex:1;display:grid;grid-template-columns:minmax(0,1fr) 7px 185px;min-height:0}
.vs{align-self:center;height:210px;width:3px;background:radial-gradient(circle at 1px 1px,#adb3b3 1px,transparent 1px) 0 0/4px 4px;justify-self:center}`,
  `<ares-titlebar></ares-titlebar><ares-menubar></ares-menubar>
<ares-toolbar class="t1">${bar('newdoc open save|print preview|cut copy paste brush|undo redo|pan zoomdyn zoomprev|propspaint')}</ares-toolbar>
<ares-toolbar class="t2"><ares-tool icon="layers"></ares-tool><ares-combo class="lay" label="Active layer" value="0"><ares-icon name="green"></ares-icon><ares-icon class="w" name="cloud"></ares-icon><ares-icon name="unlock"></ares-icon><ares-icon class="r" name="ring"></ares-icon></ares-combo>
<div class="gap"></div><ares-grip class="g"></ares-grip><ares-combo class="c" label="Line color" value="ByLayer"><ares-icon class="ring" name="ring"></ares-icon></ares-combo><ares-sep></ares-sep><ares-combo class="c" label="Line style" value="ByLayer     Solid line"></ares-combo><ares-sep></ares-sep><ares-combo class="c" label="Line weight" value="ByLayer"><ares-line></ares-line></ares-combo><ares-sep></ares-sep><ares-combo class="c" label="Print style" value="ByColor"></ares-combo><div class="gap"></div><ares-grip class="g"></ares-grip>${bar('esn1 esn2|inter appint endp perpt mid|center quad tangent|insertp node parallel perp|nearest clear|esnopt')}</ares-toolbar>
<div class="work"><ares-palette tools="erase movec mirror copyc offset array rotate scale stretch fillet addfillet brk brk2 join extend trim edithatch order editpoly bomb"></ares-palette><ares-palette tools="line iline poly rect arc3 arc circle ellipse ellarc points spline hatch note region text1 text2"></ares-palette>
<div class="right"><div class="top"><ares-drawing></ares-drawing><div class="vs"></div><ares-properties></ares-properties></div><ares-command></ares-command></div></div>
<ares-statusbar></ares-statusbar><ares-taskbar></ares-taskbar>`);
</script>
</body>
</html>
